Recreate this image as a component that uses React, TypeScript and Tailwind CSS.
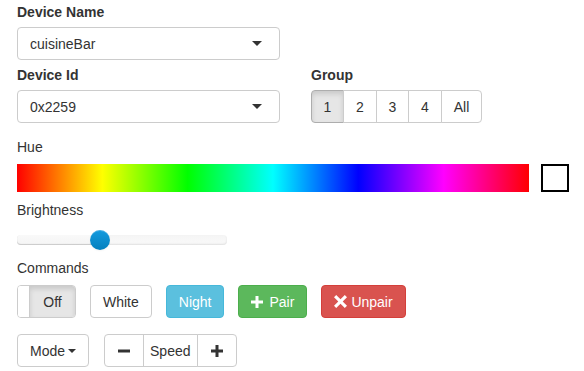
import React from 'react';

function Caret({ small = false }: { small?: boolean }) {
  return (
    <span
      className={`inline-block h-0 w-0 border-x-transparent border-t-[#333] ${
        small ? 'border-x-[4px] border-t-[4px]' : 'border-x-[5px] border-t-[5px]'
      }`}
    />
  );
}

function PlusIcon({ color }: { color: string }) {
  return (
    <svg width="12" height="12" viewBox="0 0 12 12" className="inline-block">
      <path d="M4.5 0h3v4.5H12v3H7.5V12h-3V7.5H0v-3h4.5z" fill={color} />
    </svg>
  );
}

function MinusIcon({ color }: { color: string }) {
  return (
    <svg width="12" height="12" viewBox="0 0 12 12" className="inline-block">
      <path d="M0 4.5h12v3H0z" fill={color} />
    </svg>
  );
}

function RemoveIcon({ color }: { color: string }) {
  return (
    <svg width="13" height="13" viewBox="0 0 13 13" className="inline-block">
      <path
        d="M2.2 0L6.5 4.3 10.8 0 13 2.2 8.7 6.5 13 10.8 10.8 13 6.5 8.7 2.2 13 0 10.8 4.3 6.5 0 2.2z"
        fill={color}
      />
    </svg>
  );
}

function SelectBox({ value }: { value: string }) {
  return (
    <div className="flex h-[33px] w-[263px] items-center justify-between rounded-[4px] border border-[#ccc] bg-white pl-3 pr-[17px]">
      <span>{value}</span>
      <Caret />
    </div>
  );
}

const groups = [
  { label: '1', w: 'w-[33px]' },
  { label: '2', w: 'w-[34px]' },
  { label: '3', w: 'w-[33px]' },
  { label: '4', w: 'w-[34px]' },
  { label: 'All', w: 'w-[41px]' },
];

export default function App() {
  return (
    <div className="min-h-[371px] w-[584px] bg-white px-[17px] pt-[2px] font-['Liberation_Sans',Arial,sans-serif] text-[14px] leading-5 text-[#333]">
      {/* device name */}
      <div className="mb-[5px] font-bold">Device Name</div>
      <SelectBox value="cuisineBar" />

      {/* device id + group */}
      <div className="mt-[5px] flex">
        <div>
          <div className="mb-[5px] font-bold">Device Id</div>
          <SelectBox value="0x2259" />
        </div>
        <div className="ml-[31px]">
          <div className="mb-[5px] font-bold">Group</div>
          <div className="flex h-[33px]">
            {groups.map((g, i) => (
              <div
                key={g.label}
                className={`flex items-center justify-center border ${g.w} ${i > 0 ? '-ml-px' : ''} ${
                  i === 0
                    ? 'rounded-l-[4px] border-[#adadad] bg-[#e6e6e6] shadow-[inset_0_3px_5px_rgba(0,0,0,0.125)]'
                    : 'border-[#ccc] bg-white'
                } ${i === groups.length - 1 ? 'rounded-r-[4px]' : ''}`}
              >
                {g.label}
              </div>
            ))}
          </div>
        </div>
      </div>

      {/* hue */}
      <div className="mt-[14px]">Hue</div>
      <div className="mt-[7px] flex items-center gap-3">
        <div className="h-[28px] w-[512px] shrink-0 bg-[linear-gradient(to_right,#f00_0%,#ff0_16.67%,#0f0_33.33%,#0ff_50%,#00f_66.67%,#f0f_83.33%,#f00_100%)]" />
        <div className="h-[28px] w-[28px] shrink-0 border-2 border-black bg-white" />
      </div>

      {/* brightness */}
      <div className="mt-[8px]">Brightness</div>
      <div className="relative mt-[10px] h-[20px] w-[210px]">
        <div className="absolute left-0 right-0 top-[5px] h-[10px] rounded-[4px] bg-[linear-gradient(to_bottom,#f5f5f5,#f9f9f9)] shadow-[inset_0_-1px_2px_rgba(0,0,0,0.1)]" />
        <div className="absolute left-0 top-[5px] h-[10px] w-[84px] rounded-l-[4px] bg-[linear-gradient(to_bottom,#f9f9f9,#f5f5f5)] shadow-[inset_0_-1px_1px_rgba(0,0,0,0.18)]" />
        <div className="absolute left-[73px] top-0 h-[20px] w-[20px] rounded-full bg-[linear-gradient(to_bottom,#149bdf,#0480be)] shadow-[inset_0_1px_0_rgba(255,255,255,0.2),0_1px_2px_rgba(0,0,0,0.05)]" />
      </div>

      {/* commands */}
      <div className="mt-[8px]">Commands</div>
      <div className="mt-[7px] flex h-[33px] gap-[14px]">
        <div className="flex w-[59px] overflow-hidden rounded-[4px] border border-[#ccc]">
          <div className="w-[12px] border-r border-[#ccc] bg-white" />
          <div className="flex flex-1 items-center justify-center bg-[#e6e6e6] shadow-[inset_0_3px_5px_rgba(0,0,0,0.125)]">
            Off
          </div>
        </div>
        <div className="flex items-center rounded-[4px] border border-[#ccc] bg-white px-3">White</div>
        <div className="flex items-center rounded-[4px] border border-[#46b8da] bg-[#5bc0de] px-3 text-white">
          Night
        </div>
        <div className="flex items-center gap-[6px] rounded-[4px] border border-[#4cae4c] bg-[#5cb85c] px-3 text-white">
          <PlusIcon color="#fff" />
          Pair
        </div>
        <div className="flex items-center gap-[4px] rounded-[4px] border border-[#d43f3a] bg-[#d9534f] px-3 text-white">
          <RemoveIcon color="#fff" />
          Unpair
        </div>
      </div>

      {/* mode + speed */}
      <div className="mt-[16px] flex h-[33px] gap-[15px]">
        <div className="flex items-center gap-[3px] rounded-[4px] border border-[#ccc] bg-white px-3">
          Mode
          <Caret small />
        </div>
        <div className="flex">
          <div className="flex w-[40px] items-center justify-center rounded-l-[4px] border border-[#ccc] bg-white">
            <MinusIcon color="#333" />
          </div>
          <div className="-ml-px flex items-center border border-[#ccc] bg-white px-[6px]">Speed</div>
          <div className="-ml-px flex w-[40px] items-center justify-center rounded-r-[4px] border border-[#ccc] bg-white">
            <PlusIcon color="#333" />
          </div>
        </div>
      </div>
    </div>
  );
}
